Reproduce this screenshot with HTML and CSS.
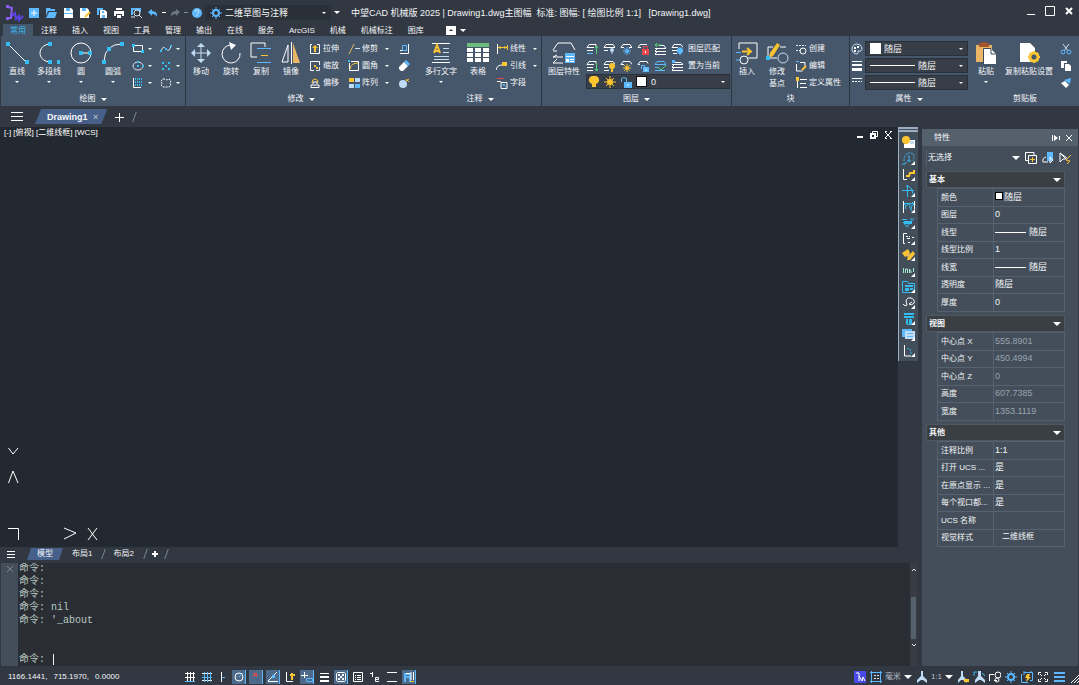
FILE: index.html
```
<!DOCTYPE html>
<html lang="zh-CN">
<head>
    <meta charset="UTF-8">
    <meta name="viewport" content="width=device-width, initial-scale=1.0">
    <title>中望CAD 机械版 2025</title>
    <link rel="stylesheet" href="styles.css">
</head>
<body>
    <!-- Title bar -->
    <header class="titlebar">
        <svg class="logo" viewBox="0 0 18 18"><path class="logo-a" d="M2 3l4 1-1 9M1 14h5"/><path class="logo-b" d="M6 12l3-3 1 6 3-3v4l4-4"/><path class="logo-fill" d="M0 1h3v3H0zM0 13h3v3H0z"/></svg>
        <div class="quick">
            <button aria-label="新建"><svg viewBox="0 0 12 12"><path class="fb" d="M1 1h10v10H1z"/><path class="w" d="M6 3v6M3 6h6"/></svg></button>
            <button aria-label="打开"><svg viewBox="0 0 12 12"><path class="fb" d="M1 1h4l1 1h4v2H3L1 9zM4 5h8l-2 6H1z"/></svg></button>
            <button aria-label="保存"><svg viewBox="0 0 12 12"><path class="fw" d="M2 1h7l2 2v8H2z"/><path class="fb" d="M4 1h4v3H4zM2 6h9v1H2z"/></svg></button>
            <button aria-label="另存为"><svg viewBox="0 0 12 12"><path class="fw" d="M1 1h7l2 2v8H1z"/><path class="fb" d="M3 1h4v3H3z"/><path class="y2" d="M11 5l-5 5"/></svg></button>
            <button aria-label="全部保存"><svg viewBox="0 0 12 12"><path class="fb" d="M1 1h6v2H3v5H1z"/><path class="fw" d="M4 3h5l2 2v6H4z"/><path class="fb" d="M6 4h2v2H6zM6 8h3v3H6z"/></svg></button>
            <button aria-label="打印"><svg viewBox="0 0 12 12"><path class="fw" d="M3 1h6v2H3zM1 4h10v5H9V7H3v2H1zM4 8h4v3H4z"/></svg></button>
            <button aria-label="预览"><svg viewBox="0 0 12 12"><path class="fb" d="M1 1h10v4H9V3H3v5H1z"/><circle cx="7" cy="6" r="3"/><path d="M9 8l3 3M1 10h4"/></svg></button>
            <button aria-label="撤销"><svg viewBox="0 0 12 12"><path class="fb" d="M1 5l4-3v2q6 0 5 6Q9 7 5 7v2z"/></svg></button>
            <span class="tick"></span>
            <button aria-label="重做"><svg viewBox="0 0 12 12"><path class="fg" d="M11 5L7 2v2Q1 4 2 10 3 7 7 7v2z"/></svg></button>
            <span class="tick dim"></span>
            <button aria-label="帮助"><svg viewBox="0 0 12 12"><circle class="fb" cx="6" cy="6" r="5"/><path d="M4 5q0-2 2-2t2 1.500T6 7M6 8v1"/></svg></button>
        </div>
        <div class="combo workspace">
            <svg viewBox="0 0 12 12"><circle class="b2" cx="6" cy="6" r="3"/><path class="b" d="M6 0v2M6 10v2M0 6h2M10 6h2M2 2l1 1M9 9l1 1M2 10l1-1M9 3l1-1"/></svg>
            <select aria-label="工作空间"><option>二维草图与注释</option></select>
            <span class="caret"></span>
        </div>
        <span class="caret line"></span>
        <h1>中望CAD 机械版 2025 | Drawing1.dwg主图幅&nbsp; 标准: 图幅: [ 绘图比例 1:1]&nbsp;&nbsp; [Drawing1.dwg]</h1>
        <div class="window-buttons">
            <button aria-label="最小化"><svg viewBox="0 0 12 12"><path class="w" d="M2 9.500h8"/></svg></button>
            <button aria-label="最大化"><svg viewBox="0 0 12 12"><path class="w" d="M1.500 1.500h9v9h-9z"/></svg></button>
            <button aria-label="关闭"><svg viewBox="0 0 12 12"><path class="w2" d="M3 3l6 6M9 3L3 9"/></svg></button>
        </div>
    </header>

    <!-- Ribbon tabs -->
    <nav class="menu">
        <a href="#" class="active">常用</a>
        <a href="#">注释</a>
        <a href="#">插入</a>
        <a href="#">视图</a>
        <a href="#">工具</a>
        <a href="#">管理</a>
        <a href="#">输出</a>
        <a href="#">在线</a>
        <a href="#">服务</a>
        <a href="#">ArcGIS</a>
        <a href="#">机械</a>
        <a href="#">机械标注</a>
        <a href="#">图库</a>
        <button class="collapse" aria-label="折叠功能区"><span></span></button>
        <span class="caret"></span>
    </nav>

    <!-- Ribbon -->
    <div class="ribbon">
        <section class="panel draw">
            <div class="panel-body">
                <button class="tool"><svg viewBox="0 0 24 24"><path class="w" d="M3 3l18 18"/><path class="fc" d="M1 1h4v4H1zM20 19h4v4h-4z"/></svg>直线<span class="caret"></span></button>
                <button class="tool"><svg viewBox="0 0 24 24"><path class="w" d="M12 3C0 5 0 19 12 21"/><path class="fc" d="M11 1h4v4h-4zM11 19h4v4h-4zM20 19h3v4h-3z"/></svg>多段线<span class="caret"></span></button>
                <button class="tool"><svg viewBox="0 0 24 24"><circle class="w" cx="12" cy="12" r="10"/><path class="w" d="M12 12h8"/><path class="fc" d="M10 10h4v4h-4zM19 10h4v4h-4z"/></svg>圆<span class="caret"></span></button>
                <button class="tool"><svg viewBox="0 0 24 24"><path class="w" d="M3 20Q4 3 21 3"/><path class="fc" d="M1 19h4v4H1zM6 6h4v4H6zM19 1h4v4h-4z"/></svg>圆弧<span class="caret"></span></button>
                <div class="stack">
                    <button class="mini" aria-label="矩形"><svg viewBox="0 0 12 12"><path class="w" d="M1.500 2.500h9v6h-9z"/><path class="fc" d="M0 1h3v3H0zM9 7h3v3H9z"/></svg><span class="caret"></span></button>
                    <button class="mini" aria-label="椭圆"><svg viewBox="0 0 12 12"><ellipse cx="6" cy="6" rx="5" ry="4"/><path class="fc" d="M5 5h2v2H5zM10 5h2v2h-2zM5 1h2v2H5z"/></svg><span class="caret"></span></button>
                    <button class="mini" aria-label="图案填充"><svg viewBox="0 0 12 12"><path class="w" d="M1.500 1v9.500H9"/><path class="c dash" d="M3.500 1v8M5.500 1v8M7.500 1v8M9.500 1v8"/></svg><span class="caret"></span></button>
                </div>
                <div class="stack">
                    <button class="mini" aria-label="样条曲线"><svg viewBox="0 0 12 12"><path d="M1 8q2-6 5-2t5-3"/><path class="fc" d="M0 7h2v2H0zM5 5h2v2H5zM10 2h2v2h-2z"/></svg><span class="caret"></span></button>
                    <button class="mini" aria-label="点"><svg viewBox="0 0 12 12"><path class="fc" d="M2 2h2v2H2zM8 2h2v2H8zM5 5h2v2H5zM2 8h2v2H2zM8 8h2v2H8z"/></svg><span class="caret"></span></button>
                    <button class="mini" aria-label="修订云线"><svg viewBox="0 0 12 12"><path class="w dash" d="M3 2h2l2 1 2-1 2 2-1 2 1 2-2 2H3L1 8l1-2-1-2z"/></svg><span class="caret"></span></button>
                </div>
            </div>
            <h2>绘图<span class="caret"></span></h2>
        </section>

        <section class="panel modify">
            <div class="panel-body">
                <button class="tool"><svg viewBox="0 0 24 24"><path class="p" d="M12 4v16M4 12h16"/><path class="fp" d="M12 2l4 4H8zM12 22l4-4H8zM2 12l4-4v8zM22 12l-4-4v8z"/></svg>移动</button>
                <button class="tool"><svg viewBox="0 0 24 24"><path class="w" d="M12 4A9 9 0 1 0 21 12"/><path class="fw" d="M10 1l7 3-5 5z"/></svg>旋转</button>
                <button class="tool"><svg viewBox="0 0 24 24"><path class="w" d="M16 6V2H2v14h6"/><path class="b" d="M8 7.500h14M8 21.500h14"/><path class="y" d="M12 14.500h7"/></svg>复制</button>
                <button class="tool"><svg viewBox="0 0 24 24"><path class="w" d="M9 4v17H3zM12.500 1v22"/><path class="ft" d="M14 2v20h7z"/></svg>镜像</button>
                <div class="stack">
                    <button class="mini"><svg viewBox="0 0 12 12"><path class="w" d="M3 1.500H1.500v9h9v-9H8"/><path class="fy" d="M6 2l3 3H7v4H5V5H3z"/></svg>拉伸</button>
                    <button class="mini"><svg viewBox="0 0 12 12"><path class="w" d="M5 10.500H1.500v-9h9V5"/><path class="fy" d="M5 5h2v2H5zM7 7h2v2H7z"/><path d="M7 10.500h3.500V7"/></svg>缩放</button>
                    <button class="mini"><svg viewBox="0 0 12 12"><path class="w" d="M2 10.500h8V8H2zM4 7V5h4v2"/><path class="y" d="M3 6q0-4 3-4t3 4"/></svg>偏移</button>
                </div>
                <div class="stack">
                    <button class="mini"><svg viewBox="0 0 12 12"><path class="t" d="M6 1L1 11"/><path class="p" d="M7 5.500h5"/></svg>修剪<span class="caret"></span></button>
                    <button class="mini"><svg viewBox="0 0 12 12"><path class="w" d="M3 1.500h7.500v9h-9V3"/><path class="y" d="M2 9q1-6 8-6"/><path class="fc" d="M0 0h2v2H0z"/></svg>圆角<span class="caret"></span></button>
                    <button class="mini"><svg viewBox="0 0 12 12"><path class="fy" d="M1 1h5v4H1z"/><path class="fp" d="M7 1h5v4H7zM1 7h5v4H1z"/><path class="fb" d="M7 7h5v4H7z"/></svg>阵列<span class="caret"></span></button>
                </div>
                <div class="stack">
                    <button class="mini" aria-label="对齐"><svg viewBox="0 0 12 12"><path class="w" d="M10.500 1v9.500H2M2 7.500h7"/><path class="b" d="M4.500 2.500h4v5h-4z"/></svg></button>
                    <button class="mini" aria-label="删除"><svg viewBox="0 0 12 12"><path class="fw" d="M1 7l5-5 4 4-5 5H3L1 9z"/><path class="fb" d="M6 2l2-2 4 4-2 2z"/></svg></button>
                    <button class="mini" aria-label="分解"><svg viewBox="0 0 12 12"><circle class="fp" cx="5" cy="7" r="4"/><path class="y" d="M8 4l3-2M8 2l3 3"/></svg></button>
                </div>
            </div>
            <h2>修改<span class="caret"></span></h2>
        </section>

        <section class="panel annotate">
            <div class="panel-body">
                <button class="tool wide"><svg viewBox="0 0 24 24"><path class="w" d="M3 2.500h18M3 21.500h18"/><path class="y2" d="M5 12l3-8 3 8M6 10h4"/><path class="p" d="M14 7.500h6M14 11.500h6M5 15.500h15M5 18.500h15"/></svg>多行文字<span class="caret"></span></button>
                <button class="tool"><svg viewBox="0 0 24 24"><path class="fgreen" d="M1 2h22v4H1z"/><path class="fw" d="M1 7h6v4H1zM9 7h6v4H9zM17 7h6v4h-6zM1 12h6v4H1zM9 12h6v4H9zM17 12h6v4h-6zM1 17h6v4H1zM9 17h6v4H9zM17 17h6v4h-6z"/></svg>表格</button>
                <div class="stack">
                    <button class="mini"><svg viewBox="0 0 12 12"><path class="w" d="M1.500 1v10"/><path class="y" d="M2 4.500h9M4 3v3M9 3v3M11.500 2v5"/></svg>线性<span class="caret"></span></button>
                    <button class="mini"><svg viewBox="0 0 12 12"><path class="w" d="M0 10q1-5 6-5"/><path class="fy" d="M6 2h5v4H6z"/></svg>引线<span class="caret"></span></button>
                    <button class="mini"><svg viewBox="0 0 12 12"><path class="r" d="M1 1.500h7"/><path class="w" d="M1 4.500h4M5 5.500h6v6H5z"/><path class="b" d="M10 10L7 7.500M7 9V7.500h2"/></svg>字段</button>
                </div>
            </div>
            <h2>注释<span class="caret"></span></h2>
        </section>

        <section class="panel layer">
            <div class="panel-body">
                <button class="tool wide"><svg viewBox="0 0 24 24"><path class="w" d="M1 9l5-7h13l4 7M5 10H1M5 14l-4 2h10M5 18l-4 4h10"/><path class="fb" d="M13 12h10v10H13z"/><path class="fw" d="M14 15h8v1h-8zM14 18h3v3h-3zM18 18h4v1h-4zM18 20h4v1h-4z"/></svg>图层特性</button>
                <div class="stack">
                    <div class="row">
                        <button class="mini" aria-label="图层合并"><svg viewBox="0 0 12 12"><path class="w" d="M1 4.500l2-3h7v2M1 4.500h7M1 7.500h6"/><path class="b" d="M1 10.500h6"/><path class="g" d="M10.500 3v8M9 5l1.500-2L12 5"/></svg></button>
                        <button class="mini" aria-label="关闭图层"><svg viewBox="0 0 12 12"><path class="w" d="M1 4.500l2-3h7l2 3M1 4.500h11M1 7.500h4"/><circle class="fp" cx="9" cy="7" r="2"/><path class="p" d="M9 8v3"/></svg></button>
                        <button class="mini" aria-label="冻结图层"><svg viewBox="0 0 12 12"><path class="w" d="M1 4.500l2-3h7l2 3H9M1 4.500h3"/><circle class="fb" cx="7" cy="8" r="2"/><path class="b dash" d="M7 4v8M3 8h8M4 5l6 6M10 5l-6 6"/></svg></button>
                        <button class="mini" aria-label="锁定图层"><svg viewBox="0 0 12 12"><path class="w" d="M1 4.500l2-3h7M1 4.500h3"/><path class="fr" d="M5 6h7v6H5z"/><path class="r" d="M6.500 6V3.500h4V6"/><path class="w" d="M8.500 8v2"/></svg></button>
                        <button class="mini" aria-label="上一个图层"><svg viewBox="0 0 12 12"><path class="w" d="M5 2.500h5l2 3H1M1 8.500h11M1 11.500h11M3 6L1 8M3 9l-2 2"/><path class="g" d="M3 0L1 2l2 2M1 2h7"/></svg></button>
                        <button class="mini" aria-label="图层匹配"><svg viewBox="0 0 12 12"><path class="w" d="M1 4.500l2-3h7l2 3M1 4.500h6M1 7.500h5M2 10.500h4"/><path class="fb" d="M6 6l3-2 3 2v3l-3 3-3-3z"/></svg></button>
                        <button class="mini">图层匹配</button>
                    </div>
                    <div class="row">
                        <button class="mini" aria-label="移到当前层"><svg viewBox="0 0 12 12"><path class="w" d="M1 4.500l2-3h7v2M1 4.500h7M1 7.500h6M1 10.500h6"/><path class="g" d="M10.500 3v8M9 9l1.500 2L12 9"/></svg></button>
                        <button class="mini" aria-label="打开图层"><svg viewBox="0 0 12 12"><path class="w" d="M1 4.500l2-3h7l2 3M1 4.500h5M1 7.500h4M1 10.500h5"/><circle class="fy" cx="9" cy="6" r="3"/><path class="y2" d="M9 8v4"/></svg></button>
                        <button class="mini" aria-label="解冻图层"><svg viewBox="0 0 12 12"><path class="w" d="M1 4.500l2-3h7l2 3M1 4.500h3"/><circle class="fy" cx="7" cy="8" r="2"/><path class="y dash" d="M7 4v8M3 8h8M4 5l6 6M10 5l-6 6"/></svg></button>
                        <button class="mini" aria-label="解锁图层"><svg viewBox="0 0 12 12"><path class="w" d="M1 4.500l2-3h7l1 2M1 4.500h2"/><path class="fb" d="M6 7h6v5H6z"/><path class="b" d="M4.500 9V5.500h3V7"/><path class="w" d="M9 9v2"/></svg></button>
                        <button class="mini" aria-label="图层状态"><svg viewBox="0 0 12 12"><path class="b" d="M1 4.500l2-3h7l2 3zM1 7.500h3M1 10.500h10"/><path class="g" d="M4 7l3 3 5-5"/></svg></button>
                        <button class="mini" aria-label="置为当前"><svg viewBox="0 0 12 12"><path class="w" d="M4 2.500h6l2 2H1M1 7.500h11M1 10.500h11M3 5L1 7M3 8l-2 2"/><path class="fb" d="M1 0h3v3H1z"/></svg></button>
                        <button class="mini">置为当前</button>
                    </div>
                    <div class="combo layers">
                        <svg viewBox="0 0 12 12"><path class="fy" d="M6 0a4 4 0 0 1 2 8v3H4V8A4 4 0 0 1 6 0"/></svg>
                        <svg viewBox="0 0 12 12"><circle class="fy" cx="6" cy="6" r="3"/><path class="y" d="M6 0v12M0 6h12M2 2l8 8M2 10l8-8"/></svg>
                        <svg viewBox="0 0 12 12"><path class="b" d="M1.500 6V2.500q2-2 5 0V6"/><path class="fb" d="M4 6h8v6H4z"/><path class="w" d="M8 8v2"/></svg>
                        <span class="swatch"></span>
                        <select aria-label="当前图层"><option>0</option></select>
                        <span class="caret"></span>
                    </div>
                </div>
            </div>
            <h2>图层<span class="caret"></span></h2>
        </section>

        <section class="panel block">
            <div class="panel-body">
                <button class="tool"><svg viewBox="0 0 24 24"><path class="w" d="M4 8V2h18v15h-9"/><circle class="w" cx="9" cy="19" r="4"/><path class="b" d="M1 11.500h5M1 19h4"/><path class="y2" d="M7 10.500h8M12 7l4 3.500-4 3.500"/></svg>插入</button>
                <button class="tool"><svg viewBox="0 0 24 24"><path class="w" d="M8 6H3v11h9M15 6h6"/><circle class="p" cx="18" cy="17" r="5"/><path class="fy" d="M12 2l3 2-7 11-4 2 1-5z"/><path class="fc" d="M1 15h4v4H1z"/></svg>修改<br>基点</button>
                <div class="stack">
                    <button class="mini"><svg viewBox="0 0 12 12"><path class="dash" d="M1 2.500h10M1 7.500h4"/><circle class="w" cx="8" cy="8" r="3"/></svg>创建</button>
                    <button class="mini"><svg viewBox="0 0 12 12"><path class="w" d="M1.500 4v7h6M5 2.500h5V6"/><path class="b" d="M1 1.500h3"/><path class="y2" d="M11 6l-4 4"/></svg>编辑</button>
                    <button class="mini"><svg viewBox="0 0 12 12"><path class="w" d="M5 2.500h7M5 6.500h6M5 10.500h7M2.500 4v7"/><path class="fy" d="M1 0h3v4H1z"/></svg>定义属性</button>
                </div>
            </div>
            <h2>块</h2>
        </section>

        <section class="panel props">
            <div class="panel-body">
                <div class="stack">
                    <div class="row">
                        <svg viewBox="0 0 12 12"><path class="p" d="M6 1a5 5 0 1 0 0 10q2-1 1-3 4 1 4-3-1-4-5-4z"/><path class="fw" d="M3 4h2v2H3zM6 3h2v2H6zM3 7h2v2H3z"/></svg>
                        <div class="combo"><span class="swatch"></span><select aria-label="颜色"><option>随层</option></select><span class="caret"></span></div>
                    </div>
                    <div class="row">
                        <svg viewBox="0 0 12 12"><path class="fw" d="M1 1h10v1H1zM1 4h10v2H1zM1 8h10v3H1z"/></svg>
                        <div class="combo"><span class="rule"></span><select aria-label="线宽"><option>随层</option></select><span class="caret"></span></div>
                    </div>
                    <div class="row">
                        <svg viewBox="0 0 12 12"><path class="w" d="M1 1.500h10"/><path class="w dash" d="M1 4.500h10"/></svg>
                        <div class="combo"><span class="rule"></span><select aria-label="线型"><option>随层</option></select><span class="caret"></span></div>
                    </div>
                </div>
            </div>
            <h2>属性<span class="caret"></span></h2>
        </section>

        <section class="panel clip">
            <div class="panel-body">
                <button class="tool"><svg viewBox="0 0 24 24"><path class="ft" d="M2 4h16v17H2z"/><path class="fbrown" d="M5 2h3V1h4v1h3v4H5z"/><path class="fw" d="M10 8h7l5 5v10H10z"/><path class="dk" d="M17 8v5h5M9.500 23V7.500H17"/></svg>粘贴<span class="caret"></span></button>
                <button class="tool xwide"><svg viewBox="0 0 24 24"><path class="fw" d="M3 2h10l5 5v14H3z"/><circle class="gear" cx="17" cy="16" r="4"/><path class="y2" d="M17 10v2M17 20v2M11 16h2M21 16h2M13 12l1 1M20 19l1 1M13 20l1-1M20 13l1-1"/></svg>复制粘贴设置</button>
                <div class="stack">
                    <button class="mini" aria-label="剪切"><svg viewBox="0 0 12 12"><path class="p" d="M3 1l5 7M9 1L4 8"/><circle class="b" cx="3" cy="9" r="2"/><circle class="b" cx="9" cy="9" r="2"/></svg></button>
                    <button class="mini" aria-label="复制"><svg viewBox="0 0 12 12"><path class="fw" d="M1 1h6v2H4v5H1zM5 4h4l2 2v5H5z"/></svg></button>
                    <button class="mini" aria-label="特性匹配"><svg viewBox="0 0 12 12"><path class="fb" d="M4 3l7-2-1 6z"/><path class="fw" d="M1 6l4-2 4 4-3 3z"/></svg></button>
                </div>
            </div>
            <h2>剪贴板</h2>
        </section>
    </div>

    <!-- Document tabs -->
    <div class="doc-tabs">
        <button class="burger" aria-label="菜单"><svg viewBox="0 0 12 12"><path class="w" d="M0 1.500h12M0 5.500h12M0 9.500h12"/></svg></button>
        <a href="#" class="doc-tab">Drawing1 <span>×</span></a>
        <button class="plus" aria-label="新建图形"><svg viewBox="0 0 12 12"><path class="w" d="M6.500 2v9M2 6.500h9"/></svg></button>
        <span class="slash"></span>
    </div>

    <div class="main">
        <div class="work">
            <div class="view-row">
                <main class="canvas">
                    <span class="view-label">[-] [俯视] [二维线框] [WCS]</span>
                    <div class="view-buttons">
                        <button aria-label="最小化视口"><svg viewBox="0 0 12 12"><path class="w2" d="M3 8h6"/></svg></button>
                        <button aria-label="还原视口"><svg viewBox="0 0 12 12"><path class="w" d="M4.500 4V2.500h5v5H8"/><path class="w2" d="M3 5h4v4H3z"/></svg></button>
                        <button aria-label="关闭视口"><svg viewBox="0 0 12 12"><path class="w" d="M3 3l6 6M9 3L3 9M3 2.500h2M8 2.500h2M3 9.500h2M8 9.500h2"/></svg></button>
                    </div>
                    <svg class="ucs" viewBox="0 0 100 100"><path d="M8.500 8l4.500 6 5-6M8.500 43L13 31l5 12M8 88.500h10.500V100M64 88l12 5-12 6M88 88l9 12M97 88l-9 12"/></svg>
                </main>
                <div class="side-tools">
                    <button aria-label="图幅"><svg viewBox="0 0 14 14"><path class="fw" d="M5 4h8v8H2V8h3z"/><path class="fp" d="M8 5h4v3H8z"/><circle class="fy" cx="4" cy="4" r="4"/></svg></button>
                    <button aria-label="序号"><svg viewBox="0 0 14 14"><path class="c dash" d="M2 9q0-8 6-8t3 8"/><path class="c" d="M6 4h1v5M5 9h4M0 12h3l1-2"/><path class="fw" d="M13 9v4H9z"/></svg></button>
                    <button aria-label="倒角"><svg viewBox="0 0 14 14"><path class="w" d="M1.500 1v10.500H5"/><path class="y2" d="M4 8h3l1-3h4V2"/><path class="fw" d="M13 9v4H9z"/></svg></button>
                    <button aria-label="中心线"><svg viewBox="0 0 14 14"><path class="c" d="M0 6.500h12M5.500 1v12M4 2q6 0 7 8"/><path class="fw" d="M13 9v4H9z"/></svg></button>
                    <button aria-label="标注"><svg viewBox="0 0 14 14"><path class="w" d="M1.500 1v12M12.500 1v8"/><path class="c" d="M2 3.500h10M4 3L2 4l2 2M10 2l2 2-2 2M4 9a3 3 0 1 1 5 0M7 6l3 5"/><path class="fw" d="M13 9v4H9z"/></svg></button>
                    <button aria-label="粗糙度"><svg viewBox="0 0 14 14"><path class="c" d="M0 3.500h5M1 6l4 5 7-9M8 3h2"/><path class="fc" d="M2 5h8v3H2z"/><path class="fw" d="M13 9v4H9z"/></svg></button>
                    <button aria-label="轮廓"><svg viewBox="0 0 14 14"><path class="w" d="M5 1.500H1.500v10H3M5 6.500h3"/><path class="w dash" d="M4 4.500h4M6 10.500h3M10 5.500h2"/><path class="fw" d="M13 9v4H9z"/></svg></button>
                    <button aria-label="零件库"><svg viewBox="0 0 14 14"><path class="fy" d="M0 5l6-4 2 4-5 4zM6 8l5-5 2 3-5 6H5z"/><path class="ft" d="M3 8l5-3-1 4z"/><path class="fw" d="M13 9v4H9z"/></svg></button>
                    <button aria-label="文字"><svg viewBox="0 0 14 14"><path class="mint" d="M1.500 4v5M3.500 9V5h2v4M7.500 9V5L9 7v2M11.500 4v4"/><path class="fw" d="M13 9v4H9z"/></svg></button>
                    <button aria-label="图库"><svg viewBox="0 0 14 14"><path class="c" d="M.5 12.500v-11h5l1 2h6v9z"/><path class="fc" d="M3 5h8v2H3zM3 8h4v3H3zM8 8h3v2H8z"/><path class="fw" d="M13 9v4H9z"/></svg></button>
                    <button aria-label="修订"><svg viewBox="0 0 14 14"><path class="w" d="M1 8q2 3 4 1L4 5q1-4 5-3t3 5q-2 3-5 1l3-2"/><path class="fw" d="M13 9v4H9z"/></svg></button>
                    <button aria-label="紧固件"><svg viewBox="0 0 14 14"><path class="fc" d="M2 1h10v5H2zM4 7h6v5l-2 1H6l-2-1z"/><path class="dk" d="M2 3.500h10M6.500 7v5"/><path class="fw" d="M13 9v4H9z"/></svg></button>
                    <button aria-label="图层"><svg viewBox="0 0 14 14"><path class="fb" d="M0 1h10v8H0z"/><path class="fp" d="M3 3h10v8H3z"/><path class="b" d="M5 5.500h6M5 8.500h6"/><path class="fw" d="M13 9v4H9z"/></svg></button>
                    <button aria-label="坐标"><svg viewBox="0 0 14 14"><path class="w" d="M2.500 1v11H9"/><path class="dash c" d="M5 5q4-2 4 5"/><path class="fw" d="M13 9v4H9z"/></svg></button>
                </div>
            </div>

            <div class="layout-tabs">
                <button class="burger" aria-label="布局菜单"><svg viewBox="0 0 12 12"><path class="w" d="M2 3.500h8M2 6.500h8M2 9.500h8"/></svg></button>
                <a href="#" class="active">模型</a>
                <a href="#">布局1</a>
                <span class="slash"></span>
                <a href="#">布局2</a>
                <span class="slash"></span>
                <button aria-label="新建布局"><svg viewBox="0 0 12 12"><path class="w2" d="M6 3v6M3 6h6"/></svg></button>
                <span class="slash"></span>
            </div>

            <div class="command">
                <button class="command-close" aria-label="关闭命令行"><svg viewBox="0 0 12 12"><path d="M3 3l6 6M9 3l-6 6"/></svg></button>
                <div class="console">
                    <p>命令:</p>
                    <p>命令:</p>
                    <p>命令:</p>
                    <p>命令: nil</p>
                    <p>命令: '_about</p>
                    <p>&nbsp;</p>
                    <p>&nbsp;</p>
                    <div class="prompt"><label for="cmd">命令:</label><input type="text" id="cmd"></div>
                </div>
                <div class="scrollbar">
                    <svg viewBox="0 0 6 6"><path d="M1 4l2-2 2 2"/></svg>
                    <div class="thumb"></div>
                    <svg viewBox="0 0 6 6"><path d="M1 2l2 2 2-2"/></svg>
                </div>
            </div>
        </div>

        <!-- Properties palette -->
        <aside class="palette">
            <div class="palette-head">
                <h2>特性</h2>
                <button aria-label="自动隐藏"><svg viewBox="0 0 12 12"><path class="w" d="M2.500 3v6M9.500 4v4"/><path class="fw" d="M4 3l4 3-4 3z"/></svg></button>
                <button aria-label="关闭"><svg viewBox="0 0 12 12"><path class="w" d="M3 3l6 6M9 3l-6 6"/></svg></button>
            </div>
            <div class="palette-pick">
                <div class="combo"><select aria-label="选择"><option>无选择</option></select><span class="caret big"></span></div>
                <button aria-label="切换选择"><svg viewBox="0 0 12 12"><path class="w" d="M9 3V.5H.5v8H3M3.500 3.500h8v8h-8z"/><path class="y" d="M7.500 5v5M5 7.500h5"/></svg></button>
                <button aria-label="选择对象"><svg viewBox="0 0 12 12"><path class="fb" d="M5 0h6v9H5z"/><path class="w" d="M4 5q-4 1-3 5h5M8 5v6l3-3z"/></svg></button>
                <button aria-label="快速选择"><svg viewBox="0 0 12 12"><path class="w" d="M1 1v9l3-3h3zM1 1l7 5"/><path class="y" d="M12 3L7 8l4 1-3 3"/></svg></button>
            </div>
            <div class="group">
                <h3>基本<span class="caret big"></span></h3>
                <table>
                    <tr><th>颜色</th><td><span class="swatch"></span>随层</td></tr>
                    <tr><th>图层</th><td>0</td></tr>
                    <tr><th>线型</th><td><span class="rule"></span>随层</td></tr>
                    <tr><th>线型比例</th><td>1</td></tr>
                    <tr><th>线宽</th><td><span class="rule"></span>随层</td></tr>
                    <tr><th>透明度</th><td>随层</td></tr>
                    <tr><th>厚度</th><td>0</td></tr>
                </table>
            </div>
            <div class="group readonly">
                <h3>视图<span class="caret big"></span></h3>
                <table>
                    <tr><th>中心点 X</th><td>555.8901</td></tr>
                    <tr><th>中心点 Y</th><td>450.4994</td></tr>
                    <tr><th>中心点 Z</th><td>0</td></tr>
                    <tr><th>高度</th><td>607.7385</td></tr>
                    <tr><th>宽度</th><td>1353.1119</td></tr>
                </table>
            </div>
            <div class="group">
                <h3>其他<span class="caret big"></span></h3>
                <table>
                    <tr><th>注释比例</th><td>1:1</td></tr>
                    <tr><th>打开 UCS ...</th><td>是</td></tr>
                    <tr><th>在原点显示 ...</th><td>是</td></tr>
                    <tr><th>每个视口都...</th><td>是</td></tr>
                    <tr><th>UCS 名称</th><td></td></tr>
                    <tr><th>视觉样式</th><td class="indent">二维线框</td></tr>
                </table>
            </div>
        </aside>
    </div>

    <!-- Status bar -->
    <footer class="status">
        <div class="coords"><span>1166.1441,</span><span>715.1970,</span><span>0.0000</span></div>
        <div class="toggles">
            <button aria-label="捕捉"><svg viewBox="0 0 12 12"><path class="w" d="M1 2.500h10M1 6.500h10M3.500 1v9M6.500 1v9M9.500 1v9"/><path class="b" d="M1 10.500h10"/></svg></button>
            <button aria-label="栅格"><svg viewBox="0 0 12 12"><path class="w" d="M1 2.500h10M1 9.500h10"/><path class="b" d="M1 6.500h10M3.500 1v10M6.500 1v10M9.500 1v10"/></svg></button>
            <button class="slim" aria-label="正交"><svg viewBox="0 0 12 12"><path class="w" d="M4.500 1v10"/><path class="b" d="M5 6.500h3"/></svg></button>
            <button class="on" aria-label="极轴"><svg viewBox="0 0 12 12"><circle class="w" cx="6" cy="6" r="4"/><path class="b" d="M6 6l4-4"/></svg></button>
            <button class="on" aria-label="对象捕捉"><svg viewBox="0 0 12 12"><path class="fr" d="M3 2h4v4H6V4L4 6 3 5l2-2H3z"/></svg></button>
            <button class="on" aria-label="对象追踪"><svg viewBox="0 0 12 12"><path class="w" d="M1 10.500h10M1 10L10 1"/><path class="fb" d="M5 4h3v3H5z"/></svg></button>
            <button aria-label="动态UCS"><svg viewBox="0 0 12 12"><path class="w" d="M2.500 1v9.500H9"/><path class="y2" d="M8 2v7M6 4h5"/></svg></button>
            <button class="on" aria-label="动态输入"><svg viewBox="0 0 12 12"><path class="w" d="M3.500 1v6M0 4.500h7"/><path class="b" d="M5.500 7.500h6v3h-6z"/></svg></button>
            <button aria-label="线宽"><svg viewBox="0 0 12 12"><path class="fw" d="M2 2h9v1H2zM2 5h9v2H2zM2 9h9v2H2z"/></svg></button>
            <button class="on" aria-label="透明度"><svg viewBox="0 0 12 12"><path class="w" d="M2.500 1.500h7l1 1v7l-1 1h-7l-1-1v-7z"/><path class="fw" d="M3 3h2v2H3zM7 3h2v2H7zM5 5h2v2H5zM3 7h2v2H3zM7 7h2v2H7z"/></svg></button>
            <button aria-label="快捷特性"><svg viewBox="0 0 12 12"><path class="w" d="M1.500 1.500h9v9h-9zM3 4.500h1M3 6.500h1M3 8.500h1M5 4.500h4M5 6.500h4M5 8.500h4"/></svg></button>
            <button aria-label="循环选择"><svg viewBox="0 0 12 12"><path class="w" d="M3.500 1v5M1 2.500h2M10 10.500H6.500v-4h3v2H7"/></svg></button>
            <button aria-label="注释监视"><svg viewBox="0 0 12 12"><path class="w" d="M1 1.500h10M1 10.500h10"/></svg></button>
            <button class="on" aria-label="单位"><svg viewBox="0 0 12 12"><path class="b2" d="M2 11V3h5v8M2 6h6"/><path class="w" d="M8 1v8M10.500 1v8M3 2.500h4"/><path class="y" d="M7 10.500h4"/></svg></button>
        </div>
        <div class="status-right">
            <button aria-label="中望"><svg viewBox="0 0 12 12"><path class="logo-bg" d="M0 0h12v12H0z"/><path class="w" d="M2 2h3v8M5 5l3 5 1-4 2 4"/></svg></button>
            <button class="unit"><svg viewBox="0 0 12 12"><path class="b" d="M1.500 0v12M10.500 0v12M0 1.500h12M0 10.500h12"/><path class="dash" d="M4 4.500h5M4 7.500h5"/></svg>毫米<span class="caret big"></span></button>
            <button class="unit"><svg viewBox="0 0 12 12"><path class="fp" d="M5 0h2v5l4 4v3L7 9H5l-4 3V9l4-4z"/></svg>1:1<span class="caret big"></span></button>
            <button aria-label="注释可见性"><svg viewBox="0 0 12 12"><path class="fp" d="M4 0h2v5l4 4v3L6 9H4l-3 3V9l3-4z"/><path class="fy" d="M7 8h5v3H7z"/></svg></button>
            <button aria-label="自动缩放"><svg viewBox="0 0 12 12"><path class="fp" d="M5 0h3v5l4 4v3L8 9H6l-4 3V9l3-4z"/><path class="c" d="M1 5V1h3M9 2l3 3"/></svg></button>
            <button aria-label="隔离对象"><svg viewBox="0 0 12 12"><path class="w" d="M.5 10V3.500H5M5 9.500h3"/><circle class="w" cx="9" cy="4" r="3"/><circle class="w" cx="8" cy="9" r="2"/></svg></button>
            <button aria-label="设置"><svg viewBox="0 0 12 12"><circle class="b2" cx="6" cy="6" r="3"/><path class="b" d="M6 0v2M6 10v2M0 6h2M10 6h2M2 2l1 1M9 9l1 1M2 10l1-1M9 3l1-1"/></svg></button>
            <button aria-label="硬件加速"><svg viewBox="0 0 12 12"><path class="b" d="M3 1.500h8.500v8H9M.5 3v8.500H7M3 0v4M10 0v2"/><path class="fy" d="M6 3h3L8 6h2l-5 5 1-4H4z"/></svg></button>
            <button aria-label="全屏"><svg viewBox="0 0 12 12"><path class="w" d="M4 1.500H1.500V4M8 1.500h2.500V4M4 10.500H1.500V8M8 10.500h2.500V8M3 3l2 2M9 3L7 5M3 9l2-2M9 9L7 7"/></svg></button>
            <button aria-label="自定义"><svg viewBox="0 0 12 12"><path class="b2" d="M1 2h11M1 6h11M1 10h11"/></svg></button>
            <svg class="grip" viewBox="0 0 8 12"><path class="w" d="M0 12l8-8M3 12l5-5M6 12l2-2"/></svg>
        </div>
    </footer>
</body>
</html>
```
FILE: styles.css
```
* {
    box-sizing: border-box;
}

body {
    margin: 0;
    min-height: 100vh;
    display: flex;
    flex-direction: column;
    background-color: #323842;
    color: #f4f6f8;
    font-family: "Liberation Sans", "Noto Sans CJK SC", sans-serif;
    font-size: 8px;
    line-height: 12px;
}

h1, h2, h3, p {
    margin: 0;
    font-size: 8px;
    font-weight: normal;
}

button, select, input {
    margin: 0;
    padding: 0;
    border: 0;
    background: none;
    color: inherit;
    font: inherit;
}

button {
    display: flex;
    align-items: center;
    justify-content: center;
    white-space: nowrap;
    cursor: pointer;
}

a {
    color: inherit;
    text-decoration: none;
}

/* Icons */
svg {
    display: block;
    flex: none;
    width: 12px;
    height: 12px;
    fill: none;
    stroke: #dfe6ec;
}

.w { stroke: #ffffff; }
.w2 { stroke: #ffffff; stroke-width: 2; }
.b { stroke: #5cb8ff; }
.b2 { stroke: #5cb8ff; stroke-width: 2; }
.c { stroke: #35bdf2; }
.y { stroke: #fbc531; }
.y2 { stroke: #fbc531; stroke-width: 2; }
.t { stroke: #e5b560; }
.p { stroke: #c8dcf0; }
.g { stroke: #52d273; }
.r { stroke: #e5484d; }
.mint { stroke: #a5e8cc; }
.dk { stroke: #3d4a5a; }
.gear { stroke: #fbc531; stroke-width: 3; fill: #46566b; }
.dash { stroke-dasharray: 2 1; }
.fw { fill: #ffffff; stroke: none; }
.fb { fill: #5cb8ff; stroke: none; }
.fc { fill: #35bdf2; stroke: none; }
.fy { fill: #fbc531; stroke: none; }
.ft { fill: #e9b566; stroke: none; }
.fp { fill: #c0dcf5; stroke: none; }
.fg { fill: #6e767f; stroke: none; }
.fr { fill: #e5484d; stroke: none; }
.fgreen { fill: #6cbd7c; stroke: none; }
.fbrown { fill: #a6532d; stroke: none; }
.logo-a { stroke: #8a5cf6; stroke-width: 2; }
.logo-b { stroke: #5b43e8; stroke-width: 2; }
.logo-fill { fill: #8a5cf6; stroke: none; }
.logo-bg { fill: #4a4ae8; stroke: none; }

.caret {
    flex: none;
    border: 2px solid transparent;
    border-top-color: #ffffff;
    border-bottom: 0;
}

.caret.big {
    border-width: 4px;
    border-bottom: 0;
}

h2 .caret,
.menu .caret {
    border-width: 3px;
    border-bottom: 0;
}

.swatch {
    flex: none;
    width: 11px;
    height: 11px;
    background-color: #ffffff;
}

.rule {
    flex: none;
    width: 45px;
    height: 1px;
    background-color: #ffffff;
}

.slash {
    width: 1px;
    height: 10px;
    background-color: #7d8690;
    transform: skewX(-20deg);
}

.combo {
    display: flex;
    align-items: center;
    gap: 3px;
    height: 15px;
    padding: 0 4px;
    background-color: #373e47;
    border: 1px solid #29313a;
}

.combo select {
    flex: 1;
    min-width: 0;
    appearance: none;
    outline: none;
    font-size: 9px;
}

/* Title bar */
.titlebar {
    display: flex;
    align-items: center;
    height: 24px;
    padding: 1px 4px 0 6px;
}

.logo {
    width: 18px;
    height: 18px;
    margin-right: 4px;
}

.quick {
    display: flex;
    align-items: center;
    gap: 5px;
}

.tick {
    width: 4px;
    height: 1px;
    margin: 0 -2px;
    background-color: #ffffff;
}

.tick.dim {
    background-color: #8a929b;
}

.workspace {
    width: 126px;
    margin-left: 2px;
    background-color: #2a3037;
}

.caret.line {
    margin: 0 11px 0 3px;
    border-width: 3px;
    border-bottom: 0;
}

.titlebar h1 {
    flex: 1;
    min-width: 0;
    overflow: hidden;
    white-space: nowrap;
    font-size: 9px;
}

.window-buttons {
    display: flex;
    gap: 7px;
    padding-bottom: 4px;
}

/* Ribbon tabs */
.menu {
    display: flex;
    align-items: center;
    gap: 1px;
    height: 12px;
    padding-left: 3px;
}

.menu a {
    padding: 1px 7px 0;
    height: 13px;
}

.menu a.active {
    background-color: #46566b;
    color: #35bdf2;
}

.collapse {
    width: 10px;
    height: 9px;
    margin: 0 3px 0 14px;
    background-color: #ffffff;
}

.collapse span {
    border: 2px solid transparent;
    border-bottom-color: #323842;
    border-top: 0;
}

/* Ribbon */
.ribbon {
    display: flex;
    height: 70px;
    margin-left: 1px;
    background-color: #46566b;
    overflow: hidden;
}

.panel {
    flex: none;
    padding-top: 4px;
    border-right: 1px solid #2c3641;
}

.draw { width: 185px; }
.modify { width: 230px; border-right: 0; }
.annotate { width: 126px; padding-left: 3px; }
.layer { width: 190px; }
.block { width: 118px; }
.props { width: 118px; border-right: 0; }
.clip { flex: 1; padding-left: 3px; border-right: 0; }

.panel-body {
    display: flex;
    height: 53px;
}

.panel h2 {
    display: flex;
    align-items: center;
    justify-content: center;
    gap: 5px;
}

.tool {
    flex-direction: column;
    justify-content: flex-start;
    width: 30px;
    height: 53px;
    line-height: 12px;
}

.draw .tool {
    width: 32px;
}

.tool.wide {
    width: 44px;
}

.tool.xwide {
    width: 56px;
}

.tool svg {
    width: 24px;
    height: 24px;
    margin: 1px 0;
}

.tool .caret {
    margin-top: 3px;
}

.stack {
    margin-left: 3px;
}

.modify .stack + .stack {
    margin-left: 9px;
}

.draw .stack {
    width: 25px;
}

.mini {
    gap: 2px;
    height: 17px;
}

.mini .caret {
    margin-left: 5px;
}

.draw .mini .caret {
    margin-left: 2px;
}

.row {
    display: flex;
    align-items: center;
    gap: 5px;
    height: 17px;
}

.layer .stack {
    flex: 1;
    margin-left: 0;
    margin-right: 1px;
}

.layers {
    gap: 4px;
    padding-left: 1px;
}

.layers .swatch {
    border: 1px solid #111111;
}

.props .stack {
    flex: 1;
    margin-left: 1px;
}

.props .row {
    gap: 2px;
}

.props .combo {
    flex: 1;
    min-width: 0;
}

/* Document tabs */
.doc-tabs {
    display: flex;
    align-items: center;
    height: 21px;
    padding-left: 11px;
}

.doc-tab {
    margin: 0 6px 0 12px;
    padding: 2px 8px 1px 12px;
    background-color: #46608a;
    clip-path: polygon(6px 0, 100% 0, calc(100% - 6px) 100%, 0 100%);
    font-size: 9px;
    font-weight: bold;
}

.doc-tab span {
    margin: 0 1px 0 3px;
    color: #a9b4c0;
}

.plus {
    margin-right: 9px;
}

/* Work area */
.main {
    flex: 1;
    display: flex;
    gap: 3px;
}

.work {
    flex: 1;
    min-width: 0;
    display: flex;
    flex-direction: column;
}

.view-row {
    flex: 1;
    display: flex;
    align-items: flex-start;
}

.canvas {
    flex: 1;
    align-self: stretch;
    position: relative;
    background-color: #222930;
}

.view-label {
    display: block;
    padding-left: 4px;
    color: #ffffff;
}

.view-buttons {
    position: absolute;
    top: 2px;
    right: 4px;
    display: flex;
    gap: 2px;
}

.ucs {
    position: absolute;
    left: 0;
    bottom: 7px;
    width: 100px;
    height: 100px;
    stroke: #ffffff;
}

.side-tools {
    width: 20px;
    margin-right: 1px;
    padding: 3px 0 2px 1px;
    background-color: #434e5b;
    border-left: 1px solid #9daec2;
    border-top: 5px double #9daec2;
}

.side-tools button {
    width: 17px;
    height: 16px;
}

.side-tools svg {
    width: 14px;
    height: 14px;
}

.layout-tabs {
    display: flex;
    align-items: center;
    height: 16px;
    padding: 0 0 2px 5px;
}

.layout-tabs a {
    padding: 0 9px;
}

.layout-tabs .slash {
    margin: 0 0 0 2px;
}

.layout-tabs a.active {
    margin-left: 10px;
    padding: 0 10px;
    background-color: #46608a;
    clip-path: polygon(4px 0, 100% 0, calc(100% - 4px) 100%, 0 100%);
}

.layout-tabs button {
    margin: 0 3px;
}

.layout-tabs .burger {
    margin: 0;
}

.command {
    display: flex;
    height: 103px;
    margin: 0 2px 0 1px;
    background-color: #2a2d33;
    overflow: hidden;
}

.command-close {
    width: 17px;
    align-items: flex-start;
    background-color: #434e5a;
}

.command-close svg {
    stroke: #7d8690;
}

.console {
    flex: 1;
    display: flex;
    flex-direction: column;
    justify-content: flex-end;
    padding-left: 1px;
    font-family: "Liberation Mono", "Noto Sans CJK SC", monospace;
    color: #b9c9c4;
}

.console p,
.prompt {
    flex: none;
    height: 13px;
    font-size: 10px;
    line-height: 13px;
}

.prompt {
    display: flex;
    align-items: center;
    gap: 8px;
}

.prompt input {
    flex: 1;
    height: 11px;
    border-left: 1px solid #eef1f4;
    outline: none;
}

.scrollbar {
    display: flex;
    flex-direction: column;
    justify-content: space-between;
    align-items: center;
    width: 7px;
    padding: 4px 0 18px;
    background-color: #393d43;
}

.scrollbar svg {
    width: 6px;
    height: 6px;
}

.thumb {
    width: 5px;
    height: 42px;
    margin-top: 20px;
    background-color: #55606d;
}

/* Properties palette */
.palette {
    width: 156px;
    margin: 2px 1px 0 0;
    background-color: #434e5a;
}

.palette-head {
    display: flex;
    align-items: center;
    gap: 1px;
    height: 17px;
    padding: 0 3px 0 12px;
    background-color: #55606d;
}

.palette-head h2 {
    flex: 1;
}

.palette-pick {
    display: flex;
    align-items: center;
    gap: 5px;
    padding: 4px 7px 5px 4px;
}

.palette-pick .combo {
    flex: 1;
    height: 16px;
    padding: 0 0 0 1px;
    background: none;
    border: 0;
    border-left: 1px solid #55606d;
}

.palette-pick select {
    font-size: 8px;
}

.group {
    margin: 0 13px 3px 4px;
}

.group h3 {
    display: flex;
    align-items: center;
    justify-content: space-between;
    height: 17px;
    padding: 0 3px 0 2px;
    background-color: #3a3f43;
    border: 1px solid #4d5863;
    font-weight: bold;
}

.group table {
    width: calc(100% - 11px);
    margin-left: 11px;
    border-collapse: collapse;
    table-layout: fixed;
}

.group th,
.group td {
    height: 17px;
    padding: 0 0 0 3px;
    border: 1px solid #56626f;
    font-weight: normal;
    line-height: 12px;
    text-align: left;
    white-space: nowrap;
}

.group tr:nth-child(odd) th {
    height: 18px;
}

.group th {
    width: 56px;
}

.group td {
    padding: 0 0 2px 1px;
    font-size: 9px;
}

.group td .swatch {
    display: inline-block;
    width: 8px;
    height: 8px;
    margin-right: 1px;
    border: 1px solid #000000;
}

.group td .rule {
    display: inline-block;
    width: 31px;
    margin-right: 3px;
    vertical-align: middle;
}

.readonly td {
    color: #98a3ae;
}

.group td.indent {
    padding-left: 8px;
    font-size: 8px;
}

/* Status bar */
.status {
    display: flex;
    align-items: center;
    height: 19px;
    padding: 2px 0 0 8px;
}

.coords {
    display: flex;
    gap: 6px;
    width: 175px;
}

.toggles {
    display: flex;
    gap: 3px;
}

.toggles button {
    width: 14px;
    height: 14px;
}

.toggles .slim {
    width: 12px;
}

.toggles .on {
    background-color: #4d6a8a;
    border-right: 1px solid #5cb8ff;
}

.status-right {
    display: flex;
    align-items: center;
    gap: 4px;
    margin-left: auto;
}

.unit {
    gap: 3px;
    color: #b4bec8;
}

.grip {
    width: 8px;
    margin-left: 2px;
}
```
